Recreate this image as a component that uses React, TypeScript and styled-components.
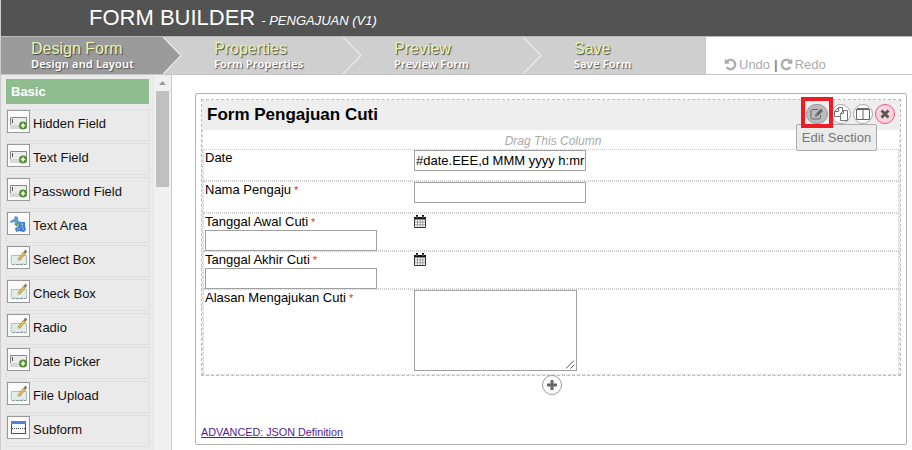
import React from "react";
import styled, { createGlobalStyle, css } from "styled-components";

const GlobalStyle = createGlobalStyle`
  * { box-sizing: border-box; }
  body { margin: 0; background: #fff; font-family: "Liberation Sans", Arial, sans-serif; font-size: 13px; color: #000; }
`;

const Page = styled.div`
  width: 912px;
  height: 450px;
  overflow: hidden;
  display: flex;
  flex-direction: column;
`;
const Header = styled.header`
  flex: none;
  height: 37px;
  padding: 0 0 0 88px;
  display: flex;
  align-items: baseline;
  background: #535353;
  border-left: 1px solid #ccc;
  border-bottom: 1px solid #b9b9b9;
  color: #fff;
  line-height: 35px;
`;
const Title = styled.h1`
  margin: 0 6px 0 0;
  font-size: 22px;
  font-weight: 400;
  line-height: 35px;
`;
const Subtitle = styled.i`
  font-size: 13px;
`;
const Nav = styled.nav`
  flex: none;
  height: 38px;
  display: flex;
  border-left: 1px solid #ccc;
  border-bottom: 1px solid #c6c6c6;
`;
const Step = styled.div<{ $width: number; $active?: boolean }>`
  flex: none;
  display: flex;
  width: ${(p) => p.$width}px;
  height: 37px;
  background: ${(p) => (p.$active ? "#9b9b9b" : "#cfcfcf")};
`;
const StepText = styled.div<{ $indent: number }>`
  flex: 1;
  padding: 3px 0 0 ${(p) => p.$indent}px;
  white-space: nowrap;
`;
const StepTitle = styled.div`
  font-size: 16px;
  line-height: 18px;
  color: #e7f5b0;
  text-shadow: 1px 1px 1px #444;
`;
const StepNote = styled.div`
  margin-top: -1px;
  font: 600 11px/14px "Noto Sans", sans-serif;
  letter-spacing: 0.18px;
  color: #fff;
  text-shadow: 1px 1px 1px #555;
`;
const ChevronSvg = styled.svg`
  flex: none;
  display: block;
`;
const History = styled.div`
  flex: 1;
  display: flex;
  align-items: center;
  padding: 17px 0 0 18px;
  border-left: 1px solid #c4c4c4;
  color: #aaa;
  line-height: 15px;
  svg { margin-right: 2px; }
`;
const Divider = styled.b`
  margin: 0 2px 0 4px;
  color: #888;
`;
const Body = styled.div`
  flex: 1;
  min-height: 0;
  display: flex;
`;
const Sidebar = styled.aside`
  flex: none;
  width: 172px;
  display: flex;
  overflow: hidden;
  border-left: 1px solid #ccc;
  border-right: 1px solid #ccc;
  background: #eaeaea;
`;
const Palette = styled.div`
  width: 153px;
  padding: 4px 5px 0;
`;
const Category = styled.div`
  height: 25px;
  margin-bottom: 5px;
  padding-left: 5px;
  background: #8fbd8f;
  color: #fff;
  font-weight: 700;
  line-height: 25px;
`;
const PaletteItem = styled.div`
  height: 32px;
  margin-bottom: 2px;
  display: flex;
  border: 1px dotted #d4d4d4;
  color: #111;
`;
const ItemIcon = styled.span`
  flex: none;
  width: 23px;
  height: 23px;
  padding: 2px;
  border: 1px solid #999;
  background: #fbfbfb;
  svg { display: block; }
`;
const ItemName = styled.span`
  padding: 6px 0 0 3px;
  line-height: 15px;
`;
const Scrollbar = styled.div`
  width: 17px;
  padding: 6px 2px 0;
  background: #f0f0f0;
`;
const ScrollArrow = styled.svg`
  display: block;
  margin: 0 auto;
`;
const Thumb = styled.div`
  height: 96px;
  margin-top: 6px;
  background: #c0c0c0;
`;
const Main = styled.main`
  flex: 1;
  padding: 18px 5px 0 23px;
`;
const Canvas = styled.div`
  height: 352px;
  padding: 5px;
  border: 1px solid #b3b3b3;
  border-radius: 2px;
  display: flex;
  flex-direction: column;
`;
const Section = styled.section`
  flex: none;
  height: 277px;
  border: 1px dashed #bbb;
`;
const SectionHead = styled.div`
  position: relative;
  height: 30px;
  display: flex;
  justify-content: space-between;
  background: #eee;
`;
const SectionTitle = styled.h2`
  margin: 0;
  padding-left: 5px;
  font-size: 17px;
  line-height: 30px;
`;
const Tools = styled.div`
  display: flex;
  align-items: center;
  gap: 2px;
  padding: 0 5px 2px 0;
  height: 30px;
`;
const ToolButton = styled.span<{ $danger?: boolean; $selected?: boolean }>`
  width: 20px;
  height: 20px;
  display: flex;
  align-items: center;
  justify-content: center;
  border: 1px solid ${(p) => (p.$danger ? "#f1557c" : "#aaa")};
  border-radius: 50%;
  background: ${(p) => (p.$danger ? "#fbd3dc" : p.$selected ? "#bbb" : "#fff")};
  ${(p) =>
    p.$selected &&
    css`
      width: 22px;
      margin-right: 1px;
      border-color: #999;
      border-radius: 10px;
    `}
`;
const Highlight = styled.div`
  position: absolute;
  top: -3px;
  right: 67px;
  width: 32px;
  height: 31px;
  border: 4px solid #ed1c24;
`;
const Tooltip = styled.div`
  position: absolute;
  top: 24px;
  right: 23px;
  width: 81px;
  height: 27px;
  border: 1px solid #aaa;
  border-radius: 2px;
  background: #ebebeb;
  color: #777;
  text-align: center;
  line-height: 25px;
  font-size: 13px;
  white-space: nowrap;
`;
const Column = styled.div`
  height: 245px;
  border-left: 1px dashed #d5d5d5;
  border-right: 1px dashed #ddd;
`;
const DragLabel = styled.div`
  height: 19px;
  padding: 4px 0 0 4px;
  text-align: center;
  font: italic 12px/15px "Liberation Sans", Arial, sans-serif;
  color: #aaa;
`;
const Field = styled.div<{ $height: number }>`
  height: ${(p) => p.$height}px;
  padding-left: 1px;
  display: grid;
  grid-template-columns: 209px 1fr;
  align-items: start;
  border: 1px dotted #ccc;
`;
const Label = styled.div`
  line-height: 15px;
  white-space: nowrap;
`;
const Required = styled.span`
  margin-left: 3px;
  color: #f22;
  font-size: 11px;
`;
const TextBox = styled.div`
  width: 172px;
  height: 21px;
  padding: 0 1px;
  border: 1px solid #a0a0a0;
  line-height: 19px;
  background: #fff;
  white-space: nowrap;
`;
const Area = styled.div`
  width: 163px;
  height: 81px;
  display: flex;
  align-items: flex-end;
  justify-content: flex-end;
  padding: 1px;
  border: 1px solid #a0a0a0;
`;
const CalendarSvg = styled.svg`
  display: block;
  margin-top: 1px;
`;
const AddRow = styled.div`
  height: 50px;
  padding-left: 1px;
  display: flex;
  justify-content: center;
`;
const AddButton = styled.span`
  width: 20px;
  height: 20px;
  margin-top: -1px;
  display: flex;
  align-items: center;
  justify-content: center;
  border: 1px solid #999;
  border-radius: 50%;
  background: #fff;
`;
const Advanced = styled.a`
  align-self: flex-start;
  font-size: 10.8px;
  line-height: 13px;
  color: #551a8b;
  text-decoration: underline;
`;

const Chevron = ({ active }: { active?: boolean }) => (
  <ChevronSvg width="19" height="37" viewBox="0 0 19 37">
    {active && <path d="M0 0H19V37H0Z" fill="#cfcfcf" />}
    {active && <path d="M0 0L18 18.5L0 37Z" fill="#9b9b9b" />}
    <path d="M0 0L18 18.5L0 37" fill="none" stroke="#eee" strokeWidth="1.1" />
  </ChevronSvg>
);

const TurnArrow = ({ flip }: { flip?: boolean }) => (
  <svg width="13" height="13" viewBox="0 0 1792 1792">
    <path
      fill="#aaa"
      stroke="#aaa"
      strokeWidth="70"
      transform={flip ? "translate(1792 0) scale(-1 1)" : undefined}
      d="M1664 896q0 156-61 298t-164 245-245 164-298 61q-172 0-327-72.5t-264-204.5q-7-10-6.5-22.5t8.5-20.5l137-138q10-9 25-9 16 2 23 12 73 95 179 147t225 52q104 0 198.5-40.5t163.5-109.5 109.5-163.5 40.5-198.5-40.5-198.5-109.5-163.5-163.5-109.5-198.5-40.5q-98 0-188 35.5t-160 101.5l137 138q31 30 14 69-17 40-59 40h-448q-26 0-45-19t-19-45v-448q0-42 40-59 39-17 69 14l130 129q107-101 244.5-156.5t284.5-55.5q156 0 298 61t245 164 164 245 61 298z"
    />
  </svg>
);

type IconKind = "field" | "area" | "edit" | "subform";

const PaletteIcon = ({ kind }: { kind: IconKind }) => (
  <svg width="17" height="17" viewBox="0 0 17 17">
    {kind === "field" && (
      <>
        <path d="M0 9H17V16H0Z" fill="#d8d8d8" />
        <path d="M.5 12V4.5H16.5V12" fill="#ededed" stroke="#888" />
        <path d="M2.5 6V10" stroke="#555" />
        <circle cx="13" cy="12.5" r="4" fill="#4f8f2f" />
        <path d="M13 10.3V14.7M10.8 12.5H15.2" stroke="#fff" strokeWidth="1.5" />
      </>
    )}
    {kind === "area" && (
      <>
        <path d="M0 6L4 4L5 1L8 2V5L10 7L8 9L4 7L1 8Z" fill="#559ae2" />
        <path d="M7 7L9 8L7 12L4 9Z" fill="#62a94e" />
        <path d="M9 7H15V11L16 15L14 17L9 16L6 17L5 13L8 12Z" fill="#3e7dd2" />
        <path d="M10 9L13 9L12 12L14 15M7 15L10 13" stroke="#91c5f4" fill="none" />
      </>
    )}
    {kind === "edit" && (
      <>
        <path d="M1.5 6.5H16.5V15.5H14L13 14.5L11 15.5H6L5 14.5L4 15.5H2L1 14Z" fill="#e2ecec" stroke="#b0bdbe" />
        <path d="M2 15.5H16" stroke="#899a9d" strokeDasharray="3 1" />
        <path d="M8.6 10.8L15.2 3.2" stroke="#8b7335" strokeWidth="2.8" />
        <path d="M9 10.3L14.5 4.1" stroke="#f3ca55" strokeWidth="1.6" />
        <path d="M14.6 1.4L16.6 3.2" stroke="#77716b" strokeWidth="2" />
        <path d="M7 12.6L8 9.8L9.8 11.4Z" fill="#e6c89c" />
      </>
    )}
    {kind === "subform" && (
      <>
        <rect x="1.5" y="2.5" width="14" height="12" fill="#f5f8fc" stroke="#315293" />
        <path d="M1 2H16V5H1Z" fill="#4d83d3" />
        <path d="M2 9.5H15" stroke="#444" strokeDasharray="1 1" />
      </>
    )}
  </svg>
);

const Calendar = () => (
  <CalendarSvg width="12" height="13" viewBox="0 0 12 13">
    <path d="M0 2H12V4.5H0Z" fill="#111" />
    <path d="M2 0H4V3H2ZM8 0H10V3H8Z" fill="#111" />
    <path d="M3 1V3M9 1V3" stroke="#bbb" strokeWidth=".7" />
    <path d="M.5 3V12.5H11.5V3" fill="none" stroke="#333" />
    <path d="M3.5 4V12M6.2 4V12M8.8 4V12M1 7H11M1 9.7H11" stroke="#8a8a8a" strokeWidth=".8" />
  </CalendarSvg>
);

const EditIcon = () => (
  <svg width="14" height="12" viewBox="0 0 14 12" fill="none">
    <path d="M10.5 7V9.5Q10.5 11 9 11H2.5Q1 11 1 9.5V3Q1 1.5 2.5 1.5H8" stroke="#666" />
    <path d="M5 8.7L5.4 6.2L10.9 .8L13 2.9L7.5 8.3Z" fill="#666" />
    <path d="M6.3 6.5L7.3 7.5" stroke="#ccc" />
  </svg>
);
const CopyIcon = () => (
  <svg width="14" height="14" viewBox="0 0 14 14" fill="#fff" stroke="#777">
    <path d="M4.5 .5H8.5V9.5H.5V4.5ZM4.5 .5V4.5H.5" />
    <path d="M9.5 3.5H13.5V13.5H6.5V6.5ZM9.5 3.5V6.5H6.5" />
  </svg>
);
const ColumnsIcon = () => (
  <svg width="14" height="12" viewBox="0 0 14 12" fill="none" stroke="#666">
    <path d="M1 1H13" strokeWidth="2" />
    <path d="M.5 1V11.5H13.5V1M7 1V11" />
  </svg>
);
const CloseIcon = () => (
  <svg width="10" height="10" viewBox="0 0 10 10">
    <path d="M1.5 1.5L8.5 8.5M8.5 1.5L1.5 8.5" stroke="#555" strokeWidth="2.8" />
  </svg>
);

const items: [string, IconKind][] = [
  ["Hidden Field", "field"],
  ["Text Field", "field"],
  ["Password Field", "field"],
  ["Text Area", "area"],
  ["Select Box", "edit"],
  ["Check Box", "edit"],
  ["Radio", "edit"],
  ["Date Picker", "field"],
  ["File Upload", "edit"],
  ["Subform", "subform"],
];

const RequiredLabel = ({ text }: { text: string }) => (
  <Label>
    {text}
    <Required>*</Required>
  </Label>
);

export default function App() {
  return (
    <Page>
      <GlobalStyle />
      <Header>
        <Title>FORM BUILDER</Title>
        <Subtitle>- PENGAJUAN (V1)</Subtitle>
      </Header>
      <Nav>
        <Step $width={181} $active>
          <StepText $indent={30}>
            <StepTitle>Design Form</StepTitle>
            <StepNote>Design and Layout</StepNote>
          </StepText>
          <Chevron active />
        </Step>
        <Step $width={180}>
          <StepText $indent={32}>
            <StepTitle>Properties</StepTitle>
            <StepNote>Form Properties</StepNote>
          </StepText>
          <Chevron />
        </Step>
        <Step $width={180}>
          <StepText $indent={32}>
            <StepTitle>Preview</StepTitle>
            <StepNote>Preview Form</StepNote>
          </StepText>
          <Chevron />
        </Step>
        <Step $width={163}>
          <StepText $indent={32}>
            <StepTitle>Save</StepTitle>
            <StepNote>Save Form</StepNote>
          </StepText>
        </Step>
        <History>
          <TurnArrow />
          Undo
          <Divider>|</Divider>
          <TurnArrow flip />
          Redo
        </History>
      </Nav>
      <Body>
        <Sidebar>
          <Palette>
            <Category>Basic</Category>
            {items.map(([name, kind]) => (
              <PaletteItem key={name}>
                <ItemIcon>
                  <PaletteIcon kind={kind} />
                </ItemIcon>
                <ItemName>{name}</ItemName>
              </PaletteItem>
            ))}
          </Palette>
          <Scrollbar>
            <ScrollArrow width="7" height="4" viewBox="0 0 7 4">
              <path d="M0 4L3.5 0L7 4Z" fill="#999" />
            </ScrollArrow>
            <Thumb />
          </Scrollbar>
        </Sidebar>
        <Main>
          <Canvas>
            <Section>
              <SectionHead>
                <SectionTitle>Form Pengajuan Cuti</SectionTitle>
                <Tools>
                  <ToolButton $selected>
                    <EditIcon />
                  </ToolButton>
                  <ToolButton>
                    <CopyIcon />
                  </ToolButton>
                  <ToolButton>
                    <ColumnsIcon />
                  </ToolButton>
                  <ToolButton $danger>
                    <CloseIcon />
                  </ToolButton>
                </Tools>
                <Tooltip>Edit Section</Tooltip>
                <Highlight />
              </SectionHead>
              <Column>
                <DragLabel>Drag This Column</DragLabel>
                <Field $height={32}>
                  <Label>Date</Label>
                  <TextBox>#date.EEE,d MMM yyyy h:mr</TextBox>
                </Field>
                <Field $height={32}>
                  <RequiredLabel text="Nama Pengaju" />
                  <TextBox />
                </Field>
                <Field $height={38}>
                  <div>
                    <RequiredLabel text="Tanggal Awal Cuti" />
                    <TextBox />
                  </div>
                  <Calendar />
                </Field>
                <Field $height={38}>
                  <div>
                    <RequiredLabel text="Tanggal Akhir Cuti" />
                    <TextBox />
                  </div>
                  <Calendar />
                </Field>
                <Field $height={86}>
                  <RequiredLabel text="Alasan Mengajukan Cuti" />
                  <Area>
                    <svg width="9" height="9" viewBox="0 0 9 9">
                      <path d="M0 8.5L8 .5M4.5 8.5L8 5" stroke="#555" />
                    </svg>
                  </Area>
                </Field>
              </Column>
            </Section>
            <AddRow>
              <AddButton>
                <svg width="10" height="10" viewBox="0 0 10 10">
                  <path d="M5 0V10M0 5H10" stroke="#666" strokeWidth="3" />
                </svg>
              </AddButton>
            </AddRow>
            <Advanced>ADVANCED: JSON Definition</Advanced>
          </Canvas>
        </Main>
      </Body>
    </Page>
  );
}
